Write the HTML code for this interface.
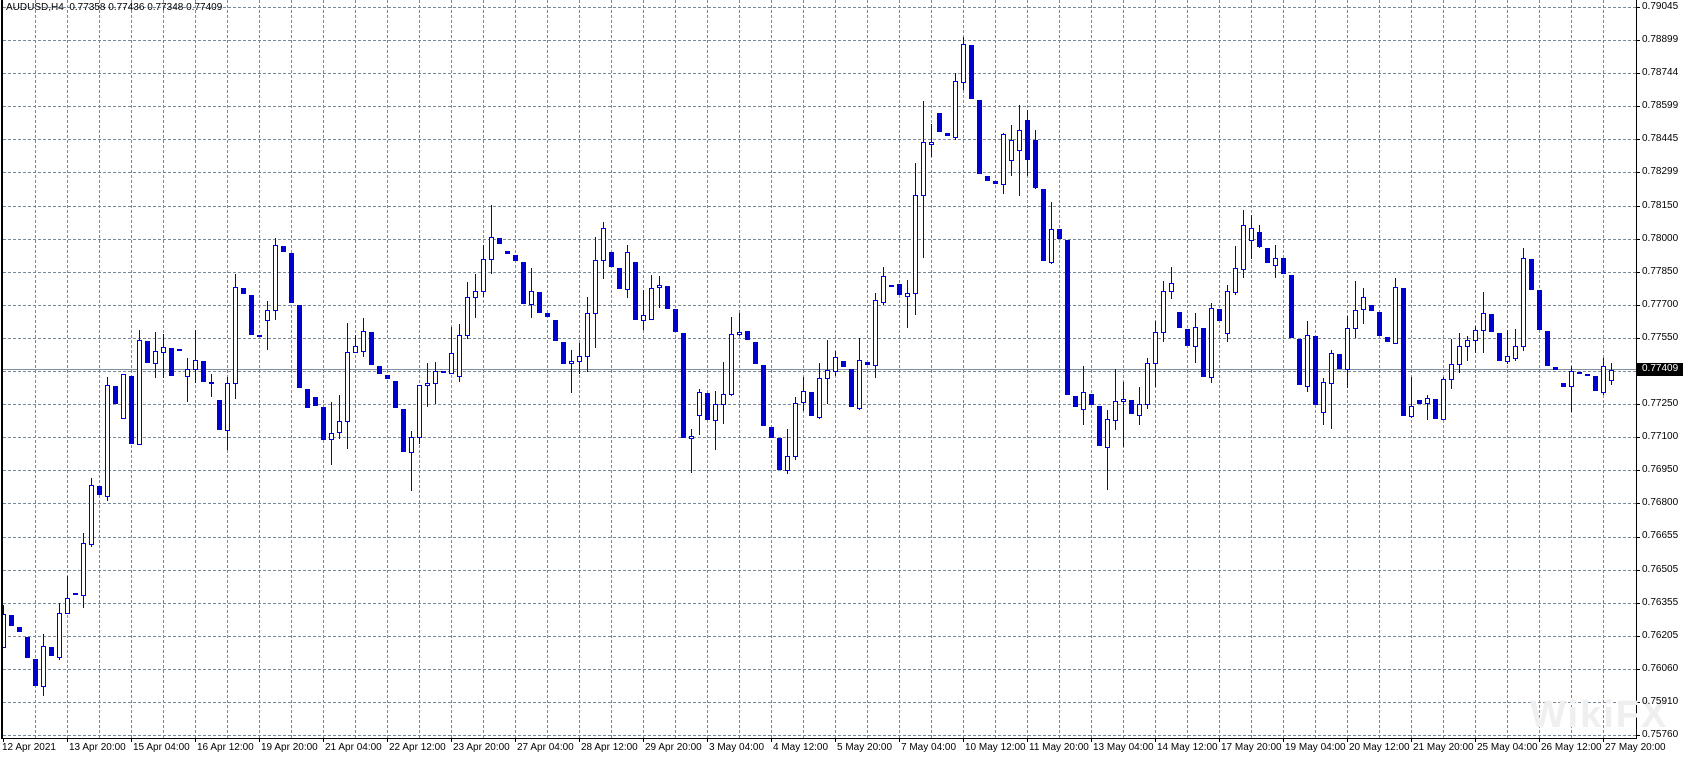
<!DOCTYPE html>
<html><head><meta charset="utf-8">
<style>
html,body{margin:0;padding:0;background:#fff;}
#w{position:relative;width:1683px;height:760px;overflow:hidden;background:#fff;font-family:"Liberation Sans",sans-serif;font-size:10px;color:#000;}
.p{position:absolute;left:1642px;line-height:12px;white-space:nowrap;}
.t{position:absolute;top:742px;line-height:12px;white-space:nowrap;}
svg{position:absolute;left:0;top:0;}
</style></head><body>
<div id="w">
<svg id="s" width="1683" height="760" shape-rendering="crispEdges"></svg>
<div style="position:absolute;left:1530px;top:694px;font-size:38px;font-weight:bold;color:#efefef;letter-spacing:2px;">WikiFX</div>
<div style="position:absolute;left:6px;top:2px;line-height:12px;white-space:nowrap;">AUDUSD,H4&nbsp; 0.77358 0.77436 0.77348 0.77409</div>
<div class="p" style="top:1px">0.79045</div>
<div class="p" style="top:34px">0.78899</div>
<div class="p" style="top:67px">0.78744</div>
<div class="p" style="top:100px">0.78599</div>
<div class="p" style="top:133px">0.78445</div>
<div class="p" style="top:166px">0.78299</div>
<div class="p" style="top:200px">0.78150</div>
<div class="p" style="top:233px">0.78000</div>
<div class="p" style="top:266px">0.77850</div>
<div class="p" style="top:299px">0.77700</div>
<div class="p" style="top:332px">0.77550</div>
<div class="p" style="top:398px">0.77250</div>
<div class="p" style="top:431px">0.77100</div>
<div class="p" style="top:464px">0.76950</div>
<div class="p" style="top:497px">0.76800</div>
<div class="p" style="top:530px">0.76655</div>
<div class="p" style="top:564px">0.76505</div>
<div class="p" style="top:597px">0.76355</div>
<div class="p" style="top:630px">0.76205</div>
<div class="p" style="top:663px">0.76060</div>
<div class="p" style="top:696px">0.75910</div>
<div class="p" style="top:729px">0.75760</div>
<div style="position:absolute;left:1637px;top:363px;width:46px;height:13px;background:#000;"></div>
<div class="p" style="top:363px;color:#fff;">0.77409</div>
<div class="t" style="left:2px">12 Apr 2021</div>
<div class="t" style="left:69px">13 Apr 20:00</div>
<div class="t" style="left:133px">15 Apr 04:00</div>
<div class="t" style="left:197px">16 Apr 12:00</div>
<div class="t" style="left:261px">19 Apr 20:00</div>
<div class="t" style="left:325px">21 Apr 04:00</div>
<div class="t" style="left:389px">22 Apr 12:00</div>
<div class="t" style="left:453px">23 Apr 20:00</div>
<div class="t" style="left:517px">27 Apr 04:00</div>
<div class="t" style="left:581px">28 Apr 12:00</div>
<div class="t" style="left:645px">29 Apr 20:00</div>
<div class="t" style="left:709px">3 May 04:00</div>
<div class="t" style="left:773px">4 May 12:00</div>
<div class="t" style="left:837px">5 May 20:00</div>
<div class="t" style="left:901px">7 May 04:00</div>
<div class="t" style="left:965px">10 May 12:00</div>
<div class="t" style="left:1029px">11 May 20:00</div>
<div class="t" style="left:1093px">13 May 04:00</div>
<div class="t" style="left:1157px">14 May 12:00</div>
<div class="t" style="left:1221px">17 May 20:00</div>
<div class="t" style="left:1285px">19 May 04:00</div>
<div class="t" style="left:1349px">20 May 12:00</div>
<div class="t" style="left:1413px">21 May 20:00</div>
<div class="t" style="left:1477px">25 May 04:00</div>
<div class="t" style="left:1541px">26 May 12:00</div>
<div class="t" style="left:1605px">27 May 20:00</div>
</div>
<script>
(function(){
var s=document.getElementById('s'),h='';
var G='#778899';
for(var k=0;k<=22;k++){var y=Math.round(6.9+33.1*k)+0.5;h+='<line x1="3" y1="'+y+'" x2="1636" y2="'+y+'" stroke="'+G+'" stroke-dasharray="3 2"/>';
h+='<line x1="1636" y1="'+y+'" x2="1640" y2="'+y+'" stroke="#000"/>';}
for(var k=0;k<50;k++){var x=35.5+32*k;h+='<line x1="'+x+'" y1="0" x2="'+x+'" y2="738" stroke="'+G+'" stroke-dasharray="3 2"/>';}
for(var k=0;k<26;k++){var x=3.5+64*k;h+='<line x1="'+x+'" y1="738" x2="'+x+'" y2="742" stroke="#000"/>';}
h+='<line x1="2" y1="369.5" x2="1636" y2="369.5" stroke="#8090a0"/>';
var d="b 614 647 605 647|s 615 626|s 627 632|s 637 658|s 659 686|b 646 686 634 695|s 647 656|b 613 657 603 659|b 598 613 576 613|s 593 595|b 543 595 533 607|b 485 544 478 546|s 486 495|b 385 496 377 500|s 386 404|b 374 418|s 376 444|b 340 444 330 444|s 341 363|b 351 363 332 377|b 347 352 334 377|s 348 376|s 349 350|b 369 376 358 401|b 360 369 330 382|s 361 382|s 382 383 374 396|s 400 430|b 383 430 377 449|b 287 383 274 398|s 288 294|s 295 335|s 335 336|b 310 320 301 349|b 245 310 238 319|s 246 252|s 253 303|s 305 388|s 389 408|s 397 406|s 407 440|b 433 439 402 464|b 421 432 395 438|b 352 421 323 448|b 346 352 335 352|b 331 351 318 356|s 332 365|s 366 374|s 375 379|s 381 408|s 409 452|b 437 452 431 490|b 385 437 385 443|b 383 385 363 406|b 371 383 362 403|s 371 372|b 353 373 327 373|b 335 376 324 381|b 297 335 282 338|b 291 297 274 317|b 259 291 245 296|b 237 259 205 273|s 238 244|s 251 254|s 255 261|s 262 304|b 291 304 268 317|s 292 313|s 313 317|s 320 341|s 342 364|b 361 363 350 392|b 356 361 343 373|b 313 356 297 371|b 260 313 237 347|b 228 260 222 278|s 252 267|s 268 289|b 252 289 245 297|s 262 320|b 315 320 290 329|b 288 319 275 319|b 285 287 276 307|s 286 309|s 309 332|s 333 438|b 436 438 429 472|b 392 415 389 434|s 393 420|b 404 420 391 449|b 394 404 362 423|b 334 394 317 395|b 332 334 313 335|s 331 340|s 342 364|s 365 426|s 427 438|s 438 470|b 456 470 429 473|b 403 456 397 459|b 391 402 377 410|s 392 416|b 378 417 363 418|b 370 378 340 403|b 357 371 351 375|s 361 367|s 369 407|b 360 408 338 409|s 362 365|b 300 365 293 377|b 276 302 267 304|s 285 286|s 284 295|b 293 296 280 327|b 195 293 163 314|b 142 195 101 257|b 142 144 124 156|s 113 132|s 133 136|b 81 137 73 139|b 44 82 37 89|s 45 99|s 100 174|s 176 181|s 181 184|b 134 184 133 193|b 140 160 125 175|b 130 150 105 195|s 120 160 110 175|s 140 188 130 188|s 189 261|b 229 262 202 263|s 229 239|s 240 395|s 396 407|b 392 409 366 424|s 394 405|s 406 446|b 419 447 410 489|b 401 420 369 429|b 399 401 382 446|s 400 414|b 404 415 387 424|b 363 404 358 408|b 332 363 321 386|b 291 332 281 341|b 283 291 267 298|s 312 328|s 329 346|b 327 346 313 362|s 328 377|b 308 377 303 382|s 309 321|b 291 333 285 341|b 268 292 246 294|b 225 269 210 277|b 228 240 215 258|s 232 247 225 247|s 248 263|b 258 265 245 277|s 258 274|s 275 338|s 339 385|b 335 386 321 391|s 336 405|b 382 412 378 424|b 353 383 350 428|s 354 369|b 328 369 316 387|b 310 328 281 337|b 297 309 288 323|s 305 311|s 312 336|s 337 342|b 287 343 278 343|s 288 416|b 406 416 377 417|s 400 404|b 398 403 395 419|s 399 419|b 379 419 377 419|b 364 379 339 388|b 346 364 333 372|b 340 346 336 360|b 330 340 326 352|b 313 330 292 352|s 314 332|s 333 361|b 356 361 330 363|b 346 358 329 360|b 258 346 248 350|s 259 290|s 290 330|s 331 366|s 367 370|s 383 387|b 371 386 366 411|s 372 373|s 374 375|s 376 391|b 366 392 358 394|b 370 380 363 384".split('|');
var C='#0000d0';
for(var i=0;i<d.length;i++){var a=d[i].split(' ');var t=+a[1],b=+a[2],wt=a[3]?+a[3]:t,wb=a[4]?+a[4]:b;var cx=3+8*i;
if(wt<t||wb>b)h+='<rect x="'+cx+'" y="'+wt+'" width="1" height="'+(wb-wt+1)+'" fill="'+C+'"/>';
if(a[0]=='b'){h+='<rect x="'+(cx-1.5)+'" y="'+(t+0.5)+'" width="4" height="'+Math.max(b-t,1)+'" fill="#fff" stroke="'+C+'"/>';}
else{h+='<rect x="'+(cx-2)+'" y="'+t+'" width="5" height="'+Math.max(b-t,2)+'" fill="'+C+'"/>';}}
h+='<rect x="1" y="0" width="2" height="739" fill="#000"/>';
h+='<rect x="1636" y="0" width="1" height="739" fill="#000"/>';
h+='<rect x="1" y="738" width="1636" height="1" fill="#000"/>';
s.innerHTML=h;
})();
</script>
</body></html>
